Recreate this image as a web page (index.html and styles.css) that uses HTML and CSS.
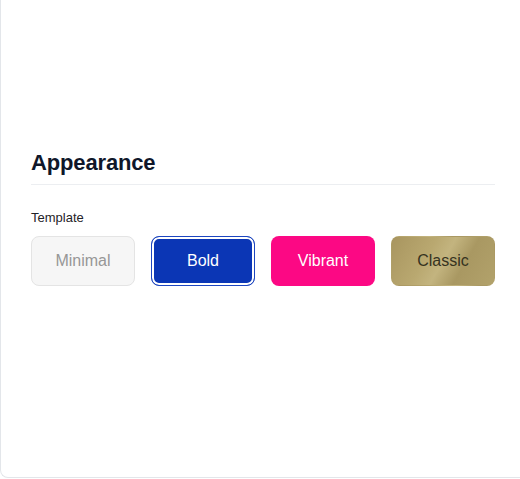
FILE: index.html
```html
<!DOCTYPE html>
<html lang="en">
<head>
<meta charset="utf-8">
<title>Appearance</title>
<link rel="stylesheet" href="styles.css">
</head>
<body>
<div class="card">
  <h2 class="section-title">Appearance</h2>
  <div class="field-label">Template</div>
  <div class="templates">
    <button class="tpl tpl-minimal">Minimal</button>
    <button class="tpl tpl-bold">Bold</button>
    <button class="tpl tpl-vibrant">Vibrant</button>
    <button class="tpl tpl-classic">Classic</button>
  </div>
</div>
</body>
</html>
```

FILE: styles.css
```css
html, body {
  margin: 0;
  padding: 0;
  background: #ffffff;
}
body {
  font-family: "Liberation Sans", Arial, sans-serif;
}
.card {
  box-sizing: border-box;
  height: 478px;
  border-left: 1px solid #e3e6ea;
  border-bottom: 1px solid #e3e6ea;
  border-radius: 0 0 0 8px;
  padding: 149px 25px 0 30px;
  background: #ffffff;
}
.section-title {
  margin: 0;
  font-size: 22px;
  line-height: 28px;
  font-weight: 700;
  letter-spacing: -0.15px;
  color: #0f172a;
  padding-bottom: 7px;
  border-bottom: 1px solid #eceef1;
}
.field-label {
  margin-top: 25px;
  font-size: 13px;
  line-height: 16px;
  color: #1f2328;
}
.templates {
  margin-top: 10px;
  display: grid;
  grid-template-columns: repeat(4, 104px);
  gap: 16px;
}
.tpl {
  box-sizing: border-box;
  height: 50px;
  border-radius: 8px;
  font-family: "Liberation Sans", Arial, sans-serif;
  font-size: 16px;
  border: 1px solid transparent;
  padding: 0;
}
.tpl-minimal {
  background: #f6f6f6;
  border-color: #e4e4e4;
  color: #979797;
}
.tpl-bold {
  background: #0b36b5;
  border-color: #1d46c0;
  box-shadow: inset 0 0 0 2px #ffffff;
  color: #ffffff;
}
.tpl-vibrant {
  background: #fc0884;
  color: #ffffff;
}
.tpl-classic {
  background: linear-gradient(120deg, #a8955f 0%, #b9a870 35%, #c3b47f 50%, #a99862 68%, #b2a26b 100%);
  color: #36331f;
}
```
